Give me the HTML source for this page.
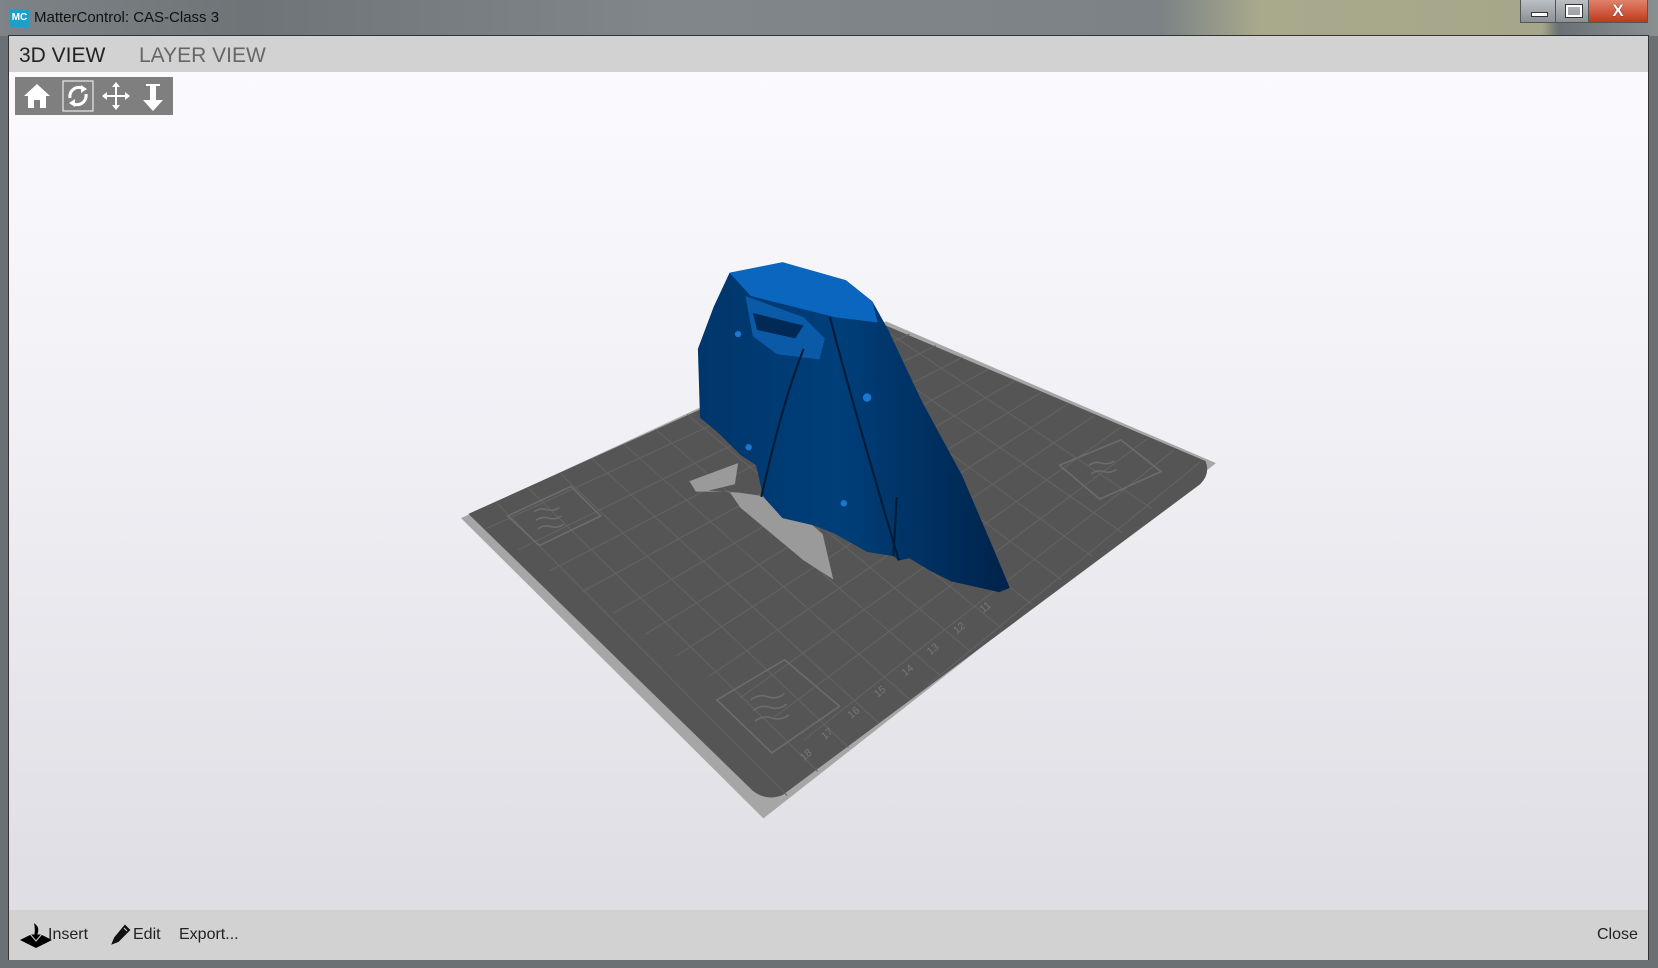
<!DOCTYPE html>
<html><head><meta charset="utf-8"><style>
html,body{margin:0;padding:0;width:1658px;height:968px;overflow:hidden;background:#6a7074;font-family:"Liberation Sans",sans-serif}
#title{position:absolute;left:0;top:0;width:1658px;height:36px;background:linear-gradient(90deg,#7d8386 0%,#6f7477 15%,#80868a 40%,#7c8285 70%,#a9a98c 76%,#a6a78a 93%,#6b7074 94%,#8a8f92 100%)}
#title .t{position:absolute;left:34px;top:9px;font-size:15px;color:#111}
#title .ic{position:absolute;left:10px;top:9px;width:19px;height:18px;background:#1ba0c8;color:#fff;font-size:10px;line-height:18px;text-align:center;font-weight:bold}
.wb{position:absolute;top:0;height:23px;border:1px solid #555;border-top:none;box-sizing:border-box}
#frame{position:absolute;left:8px;top:35px;width:1641px;height:925px;background:#d2d2d2;border:1px solid #333;box-sizing:border-box}
#tabs{position:absolute;left:0;top:0;width:100%;height:36px;background:#d2d2d2}
#tabs span{position:absolute;top:8px;font-size:21px}
#view{position:absolute;left:0;top:36px;width:100%;height:874px;background:linear-gradient(#fbfbff 0%,#f0f0f5 40%,#dcdce2 100%)}
#bottom{position:absolute;left:0;top:874px;width:100%;height:50px;background:#d2d2d2}
#bottom span{position:absolute;top:16px;font-size:16px;color:#222}
#tb{position:absolute;left:6px;top:5px;width:158px;height:38px;background:#7f7f7f}
</style></head><body>
<div id="title"><div class="ic">MC</div><div class="t">MatterControl: CAS-Class 3</div>
<div class="wb" style="left:1520px;width:36px;background:linear-gradient(#bcc0c4,#8a9094)"><div style="position:absolute;left:10px;top:12px;width:15px;height:3px;background:#fff;border:1px solid #333"></div></div>
<div class="wb" style="left:1555px;width:34px;background:linear-gradient(#bcc0c4,#8a9094)"><div style="position:absolute;left:10px;top:5px;width:12px;height:8px;border:2px solid #fff;outline:1px solid #333"></div></div>
<div class="wb" style="left:1588px;width:60px;background:linear-gradient(#e0826a,#c0381c);color:#fff;font-weight:bold;font-size:17px;text-align:center;line-height:22px;text-shadow:0 0 1px #000">X</div>
</div>
<div id="frame">
<div id="tabs"><span style="left:10px;color:#222">3D VIEW</span><span style="left:130px;color:#666">LAYER VIEW</span></div>
<div id="view">
<div id="tb">
<svg width="158" height="38" viewBox="0 0 158 38">
<path d="M9 19 L22 7 L35 19 L31 19 L31 31 L25 31 L25 23 L19 23 L19 31 L13 31 L13 19Z" fill="#fff"/>
<rect x="48" y="4" width="30" height="30" fill="none" stroke="#fff" stroke-width="1"/>
<path d="M55 21 A9 9 0 0 1 69 12" fill="none" stroke="#fff" stroke-width="3"/><path d="M66 8 L72 12 L66 16Z" fill="#fff"/>
<path d="M71 17 A9 9 0 0 1 57 26" fill="none" stroke="#fff" stroke-width="3"/><path d="M60 30 L54 26 L60 22Z" fill="#fff"/>
<path d="M101 6 L101 32 M88 19 L114 19" stroke="#fff" stroke-width="2"/>
<path d="M101 5 L97 10 L105 10Z M101 33 L97 28 L105 28Z M87 19 L92 15 L92 23Z M115 19 L110 15 L110 23Z" fill="#fff"/>
<path d="M131 7 L145 7 L145 9 L141 9 L141 23 L148 23 L138 34 L128 23 L135 23 L135 9 L131 9Z" fill="#fff"/>
</svg></div>
</div>
<div id="bottom">
<svg style="position:absolute;left:10px;top:12px" width="34" height="28" viewBox="0 0 34 28"><path d="M1 18 L17 10 L33 18 L17 26Z" fill="#000"/><path d="M14 0 Q22 4 19 12 L23 12 L17 19 L11 12 L15 12 Q16 5 14 0Z" fill="#000" stroke="#d2d2d2" stroke-width="1"/></svg>
<span style="left:39px">Insert</span>
<svg style="position:absolute;left:102px;top:14px" width="20" height="22" viewBox="0 0 20 22"><path d="M14 2 L18 6 L7 17 L2 19 L4 14Z" fill="#111" stroke="#111" stroke-width="2"/><path d="M13 4 L16 7" stroke="#d2d2d2" stroke-width="1"/></svg>
<span style="left:124px">Edit</span>
<span style="left:170px">Export...</span>
<span style="left:1588px">Close</span>
</div>
</div>
<svg style="position:absolute;left:0;top:0" width="1658" height="968" viewBox="0 0 1568 915.5">
<defs><clipPath id="bc"><path d="M440 488 L838 306 L1148 436 L722 770Z"/></clipPath>
<linearGradient id="bl" x1="0" y1="0" x2="1" y2="0"><stop offset="0" stop-color="#00366b"/><stop offset="0.45" stop-color="#003f7a"/><stop offset="1" stop-color="#00234a"/></linearGradient></defs>
<path d="M436 490 L838 304 L1150 438 L722 774Z" fill="#a6a6a6"/>
<path d="M443 486 L838 308 L1140 436 Q1145 448 1135 458 L740 752 Q725 758 712 748Z" fill="#555"/>
<g clip-path="url(#bc)" stroke="#636363" stroke-width="1">
<path d="M460 500 L860 316 M490 520 L885 327 M520 540 L910 338 M550 560 L935 349 M580 580 L960 360 M610 600 L985 371 M640 620 L1010 382 M670 640 L1035 393 M700 660 L1060 404 M730 680 L1085 415 M760 700 L1110 426 M790 720 L1135 437"/>
<path d="M470 476 L752 760 M500 462 L782 738 M530 448 L812 716 M560 434 L842 694 M590 420 L872 672 M620 406 L902 650 M650 392 L932 628 M680 378 L962 606 M710 364 L992 584 M740 350 L1022 562 M770 336 L1052 540 M800 322 L1082 518 M830 308 L1112 496"/>
</g>
<path d="M652 455 L698 438 L695 458 L670 464 L700 466 L740 472 L778 505 L788 548 L760 530 L700 480 L690 465 L658 465Z" fill="#9a9a9a"/>
<g fill="none" stroke="#6c6c6c" stroke-width="1.5"><path d="M480 488 L540 460 L568 488 L510 516Z M678 662 L742 624 L794 668 L730 712Z M1002 440 L1060 416 L1098 446 L1040 472Z"/>
<path d="M505 484 q6 -4 12 -2 t12 -2 M507 492 q6 -4 12 -2 t12 -2 M509 500 q6 -4 12 -2 t12 -2 M710 662 q8 -6 16 -3 t16 -3 M712 672 q8 -6 16 -3 t16 -3 M714 682 q8 -6 16 -3 t16 -3 M1030 440 q6 -4 12 -2 t12 -2 M1032 448 q6 -4 12 -2 t12 -2"/></g>
<g fill="#777" font-size="10" font-family="Liberation Sans"><text x="760" y="720" transform="rotate(-40 760 720)">18</text><text x="780" y="700" transform="rotate(-40 780 700)">17</text><text x="805" y="680" transform="rotate(-40 805 680)">16</text><text x="830" y="660" transform="rotate(-40 830 660)">15</text><text x="856" y="640" transform="rotate(-40 856 640)">14</text><text x="880" y="620" transform="rotate(-40 880 620)">13</text><text x="905" y="600" transform="rotate(-40 905 600)">12</text><text x="930" y="580" transform="rotate(-40 930 580)">11</text></g>
<path d="M662 395 L660 330 L675 290 L690 258 L740 248 L800 265 L825 285 L840 312 L872 380 L910 450 L940 520 L955 556 L945 560 L900 550 L880 540 L860 528 L850 530 L845 526 L820 522 L790 505 L770 497 L740 490 L722 470 L715 440 L700 430 L680 410Z" fill="url(#bl)"/>
<path d="M690 258 L740 248 L800 265 L825 285 L830 305 L790 300 L750 290 L710 280Z" fill="#0a66bf"/>
<path d="M705 280 L760 300 L780 320 L775 340 L735 335 L712 318Z" fill="#0b5aa8"/>
<path d="M712 296 L760 308 L752 320 L716 312Z" fill="#002a55"/>
<path d="M785 300 Q800 360 850 530 M760 330 Q740 380 720 470 M845 526 L848 470" fill="none" stroke="#001c38" stroke-width="2"/>
<circle cx="698" cy="316" r="3" fill="#1b78d0"/><circle cx="820" cy="376" r="4" fill="#1b78d0"/><circle cx="708" cy="423" r="3" fill="#1b78d0"/><circle cx="798" cy="476" r="3" fill="#1b78d0"/>
</svg>
</body></html>
